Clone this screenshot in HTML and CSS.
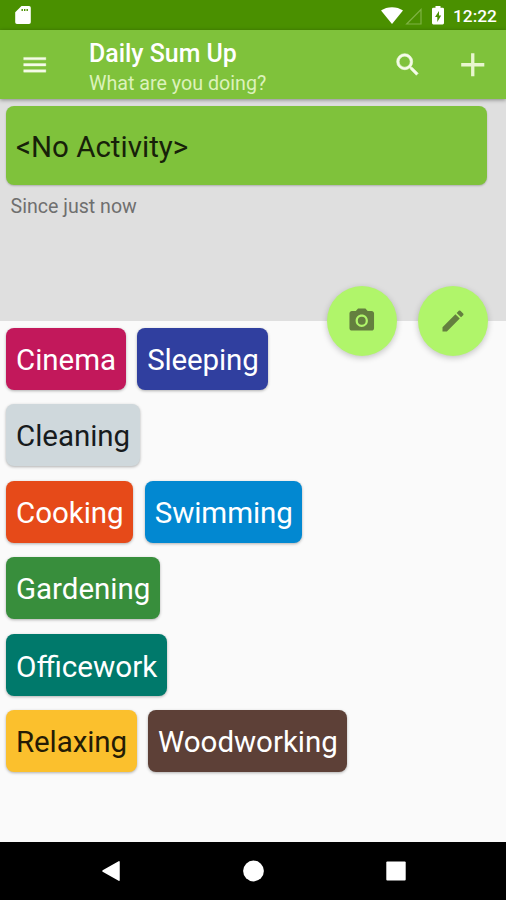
FILE: index.html
```html
<!DOCTYPE html>
<html lang="en">
<head>
<meta charset="utf-8">
<title>Daily Sum Up</title>
<link rel="stylesheet" href="styles.css">
</head>
<body>
<div class="screen">
  <div class="status-bar">
    <svg class="sd" viewBox="0 0 16 20"><path fill="#fff" fill-rule="evenodd" d="M6.500 1H14a1.800 1.800 0 0 1 1.800 1.800V17.200A1.800 1.800 0 0 1 14 19H2A1.800 1.800 0 0 1 .2 17.200V7.200zM6.500 4v2h1.400V4zM9 4v2h1.400V4zM11.500 4v2h1.400V4z"/></svg>
    <svg class="wifi" viewBox="0 0 22 17"><path fill="#fff" d="M0 3.600C6-1 16-1 22 3.600L11 17z"/></svg>
    <svg class="signal" viewBox="0 0 17 17"><path fill="none" stroke="#7fb244" stroke-width="1.200" d="M1.700 16H16V1.500z"/></svg>
    <svg class="battery" viewBox="0 0 12 19"><path fill="#fff" fill-rule="evenodd" d="M3.500 0h5v1.800h2.200q1.300 0 1.300 1.300v14q0 1.300-1.300 1.300H1.300Q0 18.400 0 17.100v-14q0-1.300 1.300-1.300h2.200zM7 5L3 11h2.300v5L9.200 9.500H7z"/></svg>
    <span class="clock">12:22</span>
  </div>
  <header class="toolbar">
    <svg class="icon menu" viewBox="0 0 24 24"><path fill="#f5fbe8" stroke="#f5fbe8" stroke-width=".3" d="M3 18h18v-2H3v2zm0-5h18v-2H3v2zm0-7v2h18V6H3z"/></svg>
    <div class="titles">
      <h1 class="title">Daily Sum Up</h1>
      <p class="subtitle">What are you doing?</p>
    </div>
    <svg class="icon search" viewBox="0 0 24 24"><path fill="#f5fbe8" stroke="#f5fbe8" stroke-width=".5" d="M15.500 14h-.79l-.28-.27A6.471 6.471 0 0 0 16 9.500 6.500 6.500 0 1 0 9.500 16c1.610 0 3.090-.59 4.230-1.570l.27.28v.79l5 4.990L20.490 19l-4.990-5zm-6 0C7.010 14 5 11.990 5 9.500S7.010 5 9.500 5 14 7.010 14 9.500 11.990 14 9.500 14z"/></svg>
    <svg class="icon add" viewBox="0 0 24 24"><path fill="none" stroke="#e9f6cf" stroke-width="2.700" d="M12 2.600v18.800M2.600 12h18.800"/></svg>
  </header>
  <section class="current">
    <div class="activity">&lt;No Activity&gt;</div>
    <p class="since">Since just now</p>
    <div class="fabs">
      <div class="fab"><svg class="icon" viewBox="0 0 24 24"><circle cx="12" cy="12" r="3.200"/><path d="M9 2L7.170 4H4c-1.100 0-2 .9-2 2v12c0 1.100.9 2 2 2h16c1.100 0 2-.9 2-2V6c0-1.100-.9-2-2-2h-3.170L15 2H9zm3 15c-2.760 0-5-2.240-5-5s2.240-5 5-5 5 2.240 5 5-2.240 5-5 5z"/></svg></div>
      <div class="fab"><svg class="icon pencil" viewBox="0 0 24 24"><path d="M3 17.250V21h3.750L17.810 9.940l-3.750-3.750L3 17.250zM20.710 7.040a1 1 0 0 0 0-1.410l-2.340-2.340a1 1 0 0 0-1.410 0l-1.830 1.830 3.750 3.750 1.830-1.830z"/></svg></div>
    </div>
  </section>
  <main class="tags">
    <div class="row"><span class="tag cinema">Cinema</span><span class="tag sleeping">Sleeping</span></div>
    <div class="row"><span class="tag cleaning">Cleaning</span></div>
    <div class="row"><span class="tag cooking">Cooking</span><span class="tag swimming">Swimming</span></div>
    <div class="row"><span class="tag gardening">Gardening</span></div>
    <div class="row"><span class="tag officework">Officework</span></div>
    <div class="row"><span class="tag relaxing">Relaxing</span><span class="tag woodworking">Woodworking</span></div>
  </main>
  <nav class="nav-bar">
    <svg viewBox="0 0 24 24"><path fill="#fff" stroke="#fff" stroke-width="1.500" stroke-linejoin="round" d="M4 12L20 2.800v18.400z"/></svg>
    <svg viewBox="0 0 24 24"><circle cx="11.500" cy="12" r="10.400" fill="#fff"/></svg>
    <svg viewBox="0 0 24 24"><rect x="2.300" y="2.600" width="19.400" height="19" rx="1" fill="#fff"/></svg>
  </nav>
</div>
</body>
</html>
```
FILE: styles.css
```css
* { box-sizing: border-box; margin: 0; padding: 0; }
body { background: #fafafa; font-family: Roboto, "Liberation Sans", sans-serif; }
.screen { width: 506px; height: 900px; display: flex; flex-direction: column; overflow: hidden; }
svg { display: block; flex: none; }
.icon { width: 29.5px; height: 29.5px; }

.status-bar { flex: none; height: 30px; background: #4a9000; display: flex; align-items: center; padding: 0 9px 0 15px; }
.sd { width: 16px; height: 20px; margin-right: auto; }
.wifi { width: 22px; height: 17px; margin-right: 2px; }
.signal { width: 17px; height: 17px; margin: 2px 10px 0 0; }
.battery { width: 12px; height: 19px; margin-right: 9px; }
.clock { width: 44px; color: #fff; font-size: 17.3px; font-weight: 500; line-height: 20px; padding-top: 1px; white-space: nowrap; }

.toolbar { flex: none; position: relative; z-index: 1; height: 69px; background: #7fc23b; display: flex; align-items: center; padding: 0 19px 0 20px; box-shadow: 0 1px 4px rgba(0, 0, 0, .4); }
.titles { margin: 0 auto 0 39.500px; padding-top: 8px; white-space: nowrap; }
.title { color: #fff; font-size: 24.900px; font-weight: 500; line-height: 30px; }
.subtitle { color: #dcf2bb; font-size: 19.700px; line-height: 30px; }
.search { margin-right: 35.500px; }

.current { flex: none; position: relative; height: 222px; background: #dfdfdf; padding: 7px 19px 0 6px; }
.activity { height: 79px; border-radius: 8px; background: #7fc23b; color: #172109; font-size: 29.500px; line-height: 82px; padding-left: 10px; box-shadow: 0 1px 2px rgba(0, 0, 0, .22); }
.since { color: #6f6f6f; font-size: 19.600px; line-height: 24px; margin: 10px 0 0 4.500px; }
.fabs { position: absolute; right: 18px; bottom: -35px; display: flex; gap: 21px; }
.fab { width: 70px; height: 70px; border-radius: 50%; background: #b0f56a; fill: #647f3f; display: flex; align-items: center; justify-content: center; box-shadow: 0 2px 6px rgba(0, 0, 0, .22); }
.pencil { width: 28px; height: 28px; }

.tags { flex: 1; background: #fafafa; padding: 7px 6px 0; display: flex; flex-direction: column; gap: 14.400px; }
.row { display: flex; gap: 11.500px; }
.tag { height: 62px; border-radius: 8px; padding: 0 9.700px 0 10px; color: #fff; font-size: 29.500px; line-height: 65px; letter-spacing: -.03px; white-space: nowrap; box-shadow: 0 1px 3px rgba(0, 0, 0, .3); }
.cinema { background: #c2185b; }
.sleeping { background: #303f9f; letter-spacing: -.15px; }
.cleaning { background: #cfd8dc; color: #171b1d; }
.cooking { background: #e64a19; }
.swimming { background: #0288d1; letter-spacing: -.1px; }
.gardening { background: #388e3c; }
.officework { background: #00796b; font-size: 29.700px; letter-spacing: normal; }
.relaxing { background: #fbc02d; color: #241b05; letter-spacing: -.1px; }
.woodworking { background: #5d4037; }

.nav-bar { flex: none; height: 58px; background: #000; display: flex; align-items: center; justify-content: space-between; padding: 0 98px 0 99px; }
.nav-bar svg { width: 24px; height: 24px; }
```
